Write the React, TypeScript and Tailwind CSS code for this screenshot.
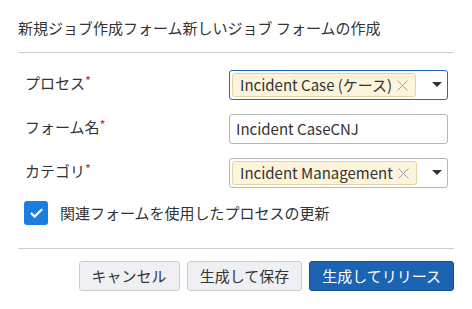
import { Check, X } from 'lucide-react'

const font = { fontFamily: '"Noto Sans CJK JP", "Noto Sans", sans-serif' }

function Label({ text }: { text: string }) {
  return (
    <div className="w-[211px] pl-[7px] pt-[2px] text-[15px] text-[#333] leading-[22px]">
      {text}
      <span className="text-[#c0392b] text-[13px] relative -top-[3px]">*</span>
    </div>
  )
}

function Tag({ text }: { text: string }) {
  return (
    <div className="flex items-center h-[24px] bg-[#fdf4dc] border border-[#e3d3a9] rounded-[3px] pl-[7px] pr-[3px] text-[15px] text-[#333]">
      <span>{text}</span>
      <X className="w-[19px] h-[19px] ml-[1px] text-[#9a9a9a]" strokeWidth={1.2} />
    </div>
  )
}

function Caret() {
  return (
    <svg width="10" height="6" viewBox="0 0 10 6" className="mr-[5px]">
      <path d="M0 0 L10 0 L5 5 Z" fill="#333" />
    </svg>
  )
}

export default function App() {
  return (
    <div className="w-[472px] h-[309px] bg-white" style={font}>
      <div className="px-[18px] pt-[17px]">
        <h1 className="text-[15px] text-[#333] leading-[22px] pb-[13px]">
          新規ジョブ作成フォーム新しいジョブ フォームの作成
        </h1>
        <div className="border-t border-[#cfcfcf]" />

        <div className="flex flex-col gap-[14px] pt-[17px] pr-[6px]">
          <div className="flex">
            <Label text="プロセス" />
            <div className="flex-1 h-[30px] border border-[#2369b3] rounded-[3px] flex items-center justify-between pl-[2px]">
              <Tag text="Incident Case (ケース)" />
              <Caret />
            </div>
          </div>
          <div className="flex">
            <Label text="フォーム名" />
            <div className="flex-1 h-[30px] border border-[#b5b5b5] rounded-[3px] flex items-center pl-[6px] text-[15px] text-[#333]">
              Incident CaseCNJ
            </div>
          </div>
          <div className="flex">
            <Label text="カテゴリ" />
            <div className="flex-1 h-[30px] border border-[#b5b5b5] rounded-[3px] flex items-center justify-between pl-[2px]">
              <Tag text="Incident Management" />
              <Caret />
            </div>
          </div>
        </div>

        <div className="flex items-center gap-[12px] pl-[6px] pt-[13px]">
          <div className="w-[24px] h-[24px] bg-[#1a7ddf] rounded-[3px] flex items-center justify-center">
            <Check className="w-[15px] h-[15px] text-white" strokeWidth={3.5} />
          </div>
          <span className="text-[15px] text-[#333] leading-[22px]">関連フォームを使用したプロセスの更新</span>
        </div>

        <div className="border-t border-[#cfcfcf] mt-[23px]" />

        <div className="flex justify-end gap-[7px] pt-[12px]">
          <button className="h-[30px] px-[12px] bg-[#eef0f3] border border-[#c9ccd1] rounded-[3px] text-[15px] text-[#333]">
            キャンセル
          </button>
          <button className="h-[30px] px-[12px] bg-[#eef0f3] border border-[#c9ccd1] rounded-[3px] text-[15px] text-[#333]">
            生成して保存
          </button>
          <button className="h-[30px] px-[12px] bg-[#1b63b3] border border-[#174f8f] rounded-[3px] text-[15px] text-white">
            生成してリリース
          </button>
        </div>
      </div>
    </div>
  )
}
